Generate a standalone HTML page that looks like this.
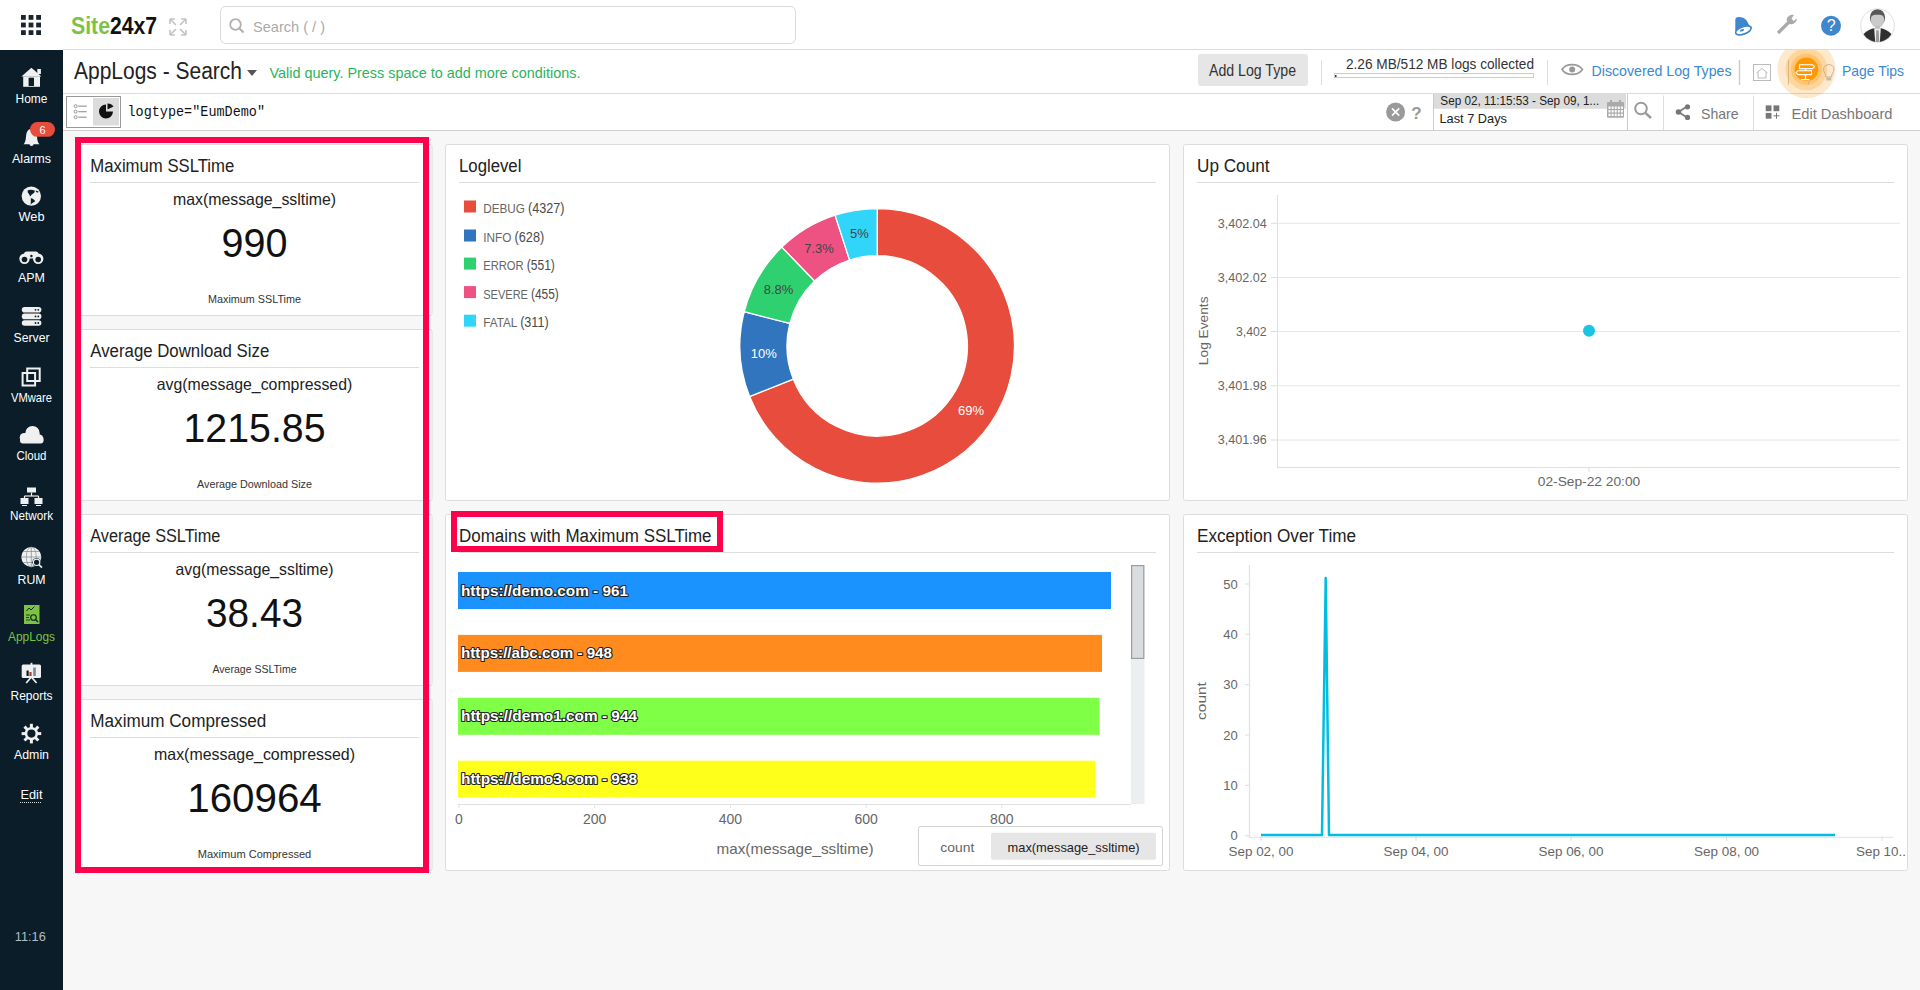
<!DOCTYPE html>
<html><head><meta charset="utf-8"><title>AppLogs - Search</title>
<style>
html,body{margin:0;padding:0;width:1920px;height:990px;overflow:hidden;background:#f7f7f7;}
svg{display:block;font-family:"Liberation Sans",sans-serif;}
</style></head><body>
<svg width="1920" height="990" viewBox="0 0 1920 990">
<rect x="0" y="0" width="1920" height="990" fill="#f7f7f7"/>
<rect x="0" y="0" width="1920" height="50" fill="#fff"/>
<line x1="63" y1="49.5" x2="1920" y2="49.5" stroke="#dcdcdc" stroke-width="1"/>
<rect x="21.0" y="15.0" width="4.8" height="4.8" fill="#1a2530"/>
<rect x="21.0" y="22.6" width="4.8" height="4.8" fill="#1a2530"/>
<rect x="21.0" y="30.2" width="4.8" height="4.8" fill="#1a2530"/>
<rect x="28.6" y="15.0" width="4.8" height="4.8" fill="#1a2530"/>
<rect x="28.6" y="22.6" width="4.8" height="4.8" fill="#1a2530"/>
<rect x="28.6" y="30.2" width="4.8" height="4.8" fill="#1a2530"/>
<rect x="36.2" y="15.0" width="4.8" height="4.8" fill="#1a2530"/>
<rect x="36.2" y="22.6" width="4.8" height="4.8" fill="#1a2530"/>
<rect x="36.2" y="30.2" width="4.8" height="4.8" fill="#1a2530"/>
<text x="71" y="34.4" font-size="23" fill="#7dc242" font-weight="bold" textLength="39" lengthAdjust="spacingAndGlyphs">Site</text>
<text x="110" y="34.4" font-size="23" fill="#111" font-weight="bold" textLength="47" lengthAdjust="spacingAndGlyphs">24x7</text>
<path d="M170 19 L175 19 M170 19 L170 24 M170 19 L176 25" fill="none" stroke="#c4c4c4" stroke-width="1.6"/>
<path d="M186 19 L181 19 M186 19 L186 24 M186 19 L180 25" fill="none" stroke="#c4c4c4" stroke-width="1.6"/>
<path d="M170 35 L175 35 M170 35 L170 30 M170 35 L176 29" fill="none" stroke="#c4c4c4" stroke-width="1.6"/>
<path d="M186 35 L181 35 M186 35 L186 30 M186 35 L180 29" fill="none" stroke="#c4c4c4" stroke-width="1.6"/>
<rect x="220.5" y="6.5" width="575" height="37" fill="#fff" stroke="#dadada" stroke-width="1" rx="5"/>
<circle cx="235.5" cy="24.5" r="5.3" fill="none" stroke="#b0b0b0" stroke-width="1.8"/>
<line x1="239.5" y1="28.5" x2="243.5" y2="32.5" stroke="#b0b0b0" stroke-width="2"/>
<text x="253" y="32" font-size="15" fill="#aaa" textLength="72" lengthAdjust="spacingAndGlyphs">Search ( / )</text>
<path d="M1735.3 31.5 L1735.3 20 C1735.3 17.6 1736.8 16.9 1739 17 C1743.5 17.2 1746 18.8 1747.8 22.5 C1749 25.2 1749.8 26.4 1751.8 26.8 L1748 33 Z" fill="#3f87cc"/>
<ellipse cx="1743.4" cy="30.4" rx="8.2" ry="3.7" transform="rotate(-20 1743.4 30.4)" fill="#fff" stroke="#3f87cc" stroke-width="1.7"/>
<ellipse cx="1742" cy="30.3" rx="2.3" ry="1" transform="rotate(-20 1742 30.3)" fill="#3f87cc"/>
<path d="M1778 33 L1790 21" fill="none" stroke="#aaa" stroke-width="3.2"/>
<path d="M1786.5 20 A6 6 0 0 1 1794 15 L1791.5 18.5 L1793.5 21 L1797 18.5 A6 6 0 0 1 1789.5 24 Z" fill="#aaa"/>
<circle cx="1831" cy="25.8" r="10" fill="#3f87cc"/>
<text x="1831.2" y="31.3" font-size="16" fill="#fff" text-anchor="middle">?</text>
<circle cx="1877.5" cy="25.6" r="16.8" fill="#fff" stroke="#e0e0e0" stroke-width="1"/>
<clipPath id="av"><circle cx="1877.5" cy="25.6" r="16.3"/></clipPath>
<g clip-path="url(#av)">
<ellipse cx="1877.5" cy="17.6" rx="7.6" ry="8.6" fill="#585858"/>
<path d="M1870.9 19 C1870.9 15.5 1873.5 14.5 1877.5 14.8 C1881.5 14.5 1884.1 15.5 1884.1 19 C1884.1 24.5 1881.5 27.8 1877.5 27.8 C1873.5 27.8 1870.9 24.5 1870.9 19 Z" fill="#cacaca"/>
<rect x="1875.3" y="26" width="4.4" height="3" fill="#bdbdbd"/>
<path d="M1861 43 L1863 34.5 C1867 30.5 1871.5 28.6 1874.3 28.3 L1880.7 28.3 C1883.5 28.6 1888 30.5 1892 34.5 L1894 43 Z" fill="#303030"/>
<path d="M1874.2 28.3 L1880.8 28.3 L1879.8 43 L1875.2 43 Z" fill="#f0f0f0"/>
<path d="M1876.3 30.2 L1878.7 30.2 L1879.3 43 L1875.7 43 Z" fill="#9a9a9a"/>
</g>
<rect x="0" y="50" width="63" height="940" fill="#0a1d28"/>
<rect x="63" y="50" width="1857" height="43" fill="#fff"/>
<line x1="63" y1="93.5" x2="1920" y2="93.5" stroke="#dcdcdc" stroke-width="1"/>
<text x="74" y="79" font-size="23" fill="#222" textLength="168" lengthAdjust="spacingAndGlyphs">AppLogs - Search</text>
<path d="M247 70 L257 70 L252 76 Z" fill="#555"/>
<text x="269.5" y="77.7" font-size="15" fill="#2db35d" textLength="311" lengthAdjust="spacingAndGlyphs">Valid query. Press space to add more conditions.</text>
<rect x="1198" y="54" width="110" height="32" fill="#e6e6e6" rx="3"/>
<text x="1209" y="76.3" font-size="16" fill="#333" textLength="87" lengthAdjust="spacingAndGlyphs">Add Log Type</text>
<line x1="1321.5" y1="60" x2="1321.5" y2="85" stroke="#ddd" stroke-width="1"/>
<text x="1346" y="68.8" font-size="14" fill="#333" textLength="188" lengthAdjust="spacingAndGlyphs">2.26 MB/512 MB logs collected</text>
<rect x="1334.5" y="73.5" width="199" height="4" fill="#fff" stroke="#ccc" stroke-width="1"/>
<rect x="1335" y="75" width="1.5" height="2" fill="#333"/>
<line x1="1547.5" y1="60" x2="1547.5" y2="85" stroke="#ddd" stroke-width="1"/>
<path d="M1562 69.5 C1566 63 1578 63 1582.5 69.5 C1578 76 1566 76 1562 69.5 Z" fill="none" stroke="#999" stroke-width="1.6"/>
<circle cx="1572.2" cy="69.5" r="3" fill="#999"/>
<text x="1591.5" y="75.7" font-size="15" fill="#3b88d1" textLength="140" lengthAdjust="spacingAndGlyphs">Discovered Log Types</text>
<line x1="1739.5" y1="60" x2="1739.5" y2="85" stroke="#ccc" stroke-width="1.5"/>
<rect x="1753.5" y="64.5" width="17" height="16" fill="#fff" stroke="#bbb" stroke-width="1"/>
<path d="M1756.5 73 L1762 68.5 L1767.5 73 M1758 72 L1758 78 L1766 78 L1766 72" fill="none" stroke="#bbb" stroke-width="1"/>
<text x="1842" y="75.7" font-size="15" fill="#3b88d1" textLength="62" lengthAdjust="spacingAndGlyphs">Page Tips</text>
<rect x="63" y="94" width="1857" height="36" fill="#fff"/>
<line x1="63" y1="130.5" x2="1920" y2="130.5" stroke="#cfcfcf" stroke-width="1"/>
<rect x="66.5" y="96.5" width="54" height="31" fill="#fff" stroke="#999" stroke-width="1"/>
<rect x="93" y="98" width="26" height="27.5" fill="#dcdcdc"/>
<circle cx="75.6" cy="106.2" r="1.5" fill="none" stroke="#8a8a8a" stroke-width="0.9"/>
<line x1="78.3" y1="106.2" x2="86.7" y2="106.2" stroke="#9a9a9a" stroke-width="1.2"/>
<circle cx="75.6" cy="111.7" r="1.5" fill="none" stroke="#8a8a8a" stroke-width="0.9"/>
<line x1="78.3" y1="111.7" x2="86.7" y2="111.7" stroke="#9a9a9a" stroke-width="1.2"/>
<circle cx="75.6" cy="117.2" r="1.5" fill="none" stroke="#8a8a8a" stroke-width="0.9"/>
<line x1="78.3" y1="117.2" x2="86.7" y2="117.2" stroke="#9a9a9a" stroke-width="1.2"/>
<path d="M106 104.5 A7 7 0 1 0 113 111.5 L106 111.5 Z" fill="#111"/>
<path d="M107.5 103.5 L107.5 109.5 L113.5 106.5 A7 7 0 0 0 107.5 103.5 Z" fill="#111"/>
<text x="127.5" y="116.2" font-size="14.5" fill="#111" textLength="137.5" lengthAdjust="spacingAndGlyphs" font-family="Liberation Mono">logtype=&quot;EumDemo&quot;</text>
<clipPath id="hc"><rect x="1700" y="50" width="220" height="80"/></clipPath><g clip-path="url(#hc)">
<circle cx="1806.4" cy="69.3" r="29" fill="#ffe9cc"/>
<circle cx="1806.4" cy="69.3" r="21" fill="#fed59c"/>
<circle cx="1806.4" cy="69.3" r="15.6" fill="#ffc470"/>
<circle cx="1806.4" cy="69.3" r="11.8" fill="#ff9800"/>
</g>
<line x1="1790.5" y1="93.5" x2="1822.3" y2="93.5" stroke="#dccbb3" stroke-width="1"/>
<line x1="1788.5" y1="60" x2="1788.5" y2="84.5" stroke="#d6b27c" stroke-width="0.9"/>
<line x1="1808.5" y1="80" x2="1808.5" y2="84.5" stroke="#d6b27c" stroke-width="0.9"/>
<path d="M1799.5 64.7 L1812.5 64.7 L1814.5 66.6 L1812.5 68.6 L1799.5 68.6 Z" fill="none" stroke="#fff" stroke-width="1.1"/>
<path d="M1811.5 70.7 L1798 70.7 L1796 72.6 L1798 74.6 L1811.5 74.6 Z" fill="none" stroke="#fff" stroke-width="1.1"/>
<path d="M1805.5 68.6 L1805.5 70.7 M1805.5 74.6 L1805.5 79.5 M1801 79.6 L1809.5 79.6" fill="none" stroke="#fff" stroke-width="1.3"/>
<path d="M1826 77 C1826 73.5 1823.5 72.5 1823.5 69.2 A5.3 5.3 0 0 1 1834 69.2 C1834 72.5 1831.5 73.5 1831.5 77 Z" fill="none" stroke="#bfae98" stroke-width="0.9"/>
<rect x="1826.2" y="77.5" width="5" height="3" fill="#c9bba8"/>
<circle cx="1395.6" cy="112" r="9.5" fill="#9a9a9a"/>
<path d="M1392 108.4 L1399.2 115.6 M1399.2 108.4 L1392 115.6" fill="none" stroke="#fff" stroke-width="1.6"/>
<text x="1416.4" y="119.4" font-size="17" fill="#999" text-anchor="middle" font-weight="bold">?</text>
<line x1="1433.5" y1="94" x2="1433.5" y2="130" stroke="#ccc" stroke-width="1"/>
<line x1="1627.5" y1="94" x2="1627.5" y2="130" stroke="#ccc" stroke-width="1"/>
<rect x="1434" y="94" width="192" height="14.75" fill="#dcdcdc"/>
<text x="1440.3" y="104.8" font-size="13" fill="#222" textLength="159" lengthAdjust="spacingAndGlyphs">Sep 02, 11:15:53 - Sep 09, 1...</text>
<text x="1439.5" y="122.5" font-size="13" fill="#222" textLength="67.5" lengthAdjust="spacingAndGlyphs">Last 7 Days</text>
<rect x="1607" y="102" width="17" height="15.8" fill="#aaa" rx="1"/>
<rect x="1610" y="100" width="2" height="4" fill="#aaa"/>
<rect x="1619" y="100" width="2" height="4" fill="#aaa"/>
<rect x="1608.5" y="106.5" width="2" height="2.4" fill="#fff"/>
<rect x="1608.5" y="110.1" width="2" height="2.4" fill="#fff"/>
<rect x="1608.5" y="113.7" width="2" height="2.4" fill="#fff"/>
<rect x="1611.6" y="106.5" width="2" height="2.4" fill="#fff"/>
<rect x="1611.6" y="110.1" width="2" height="2.4" fill="#fff"/>
<rect x="1611.6" y="113.7" width="2" height="2.4" fill="#fff"/>
<rect x="1614.7" y="106.5" width="2" height="2.4" fill="#fff"/>
<rect x="1614.7" y="110.1" width="2" height="2.4" fill="#fff"/>
<rect x="1614.7" y="113.7" width="2" height="2.4" fill="#fff"/>
<rect x="1617.8" y="106.5" width="2" height="2.4" fill="#fff"/>
<rect x="1617.8" y="110.1" width="2" height="2.4" fill="#fff"/>
<rect x="1617.8" y="113.7" width="2" height="2.4" fill="#fff"/>
<rect x="1620.9" y="106.5" width="2" height="2.4" fill="#fff"/>
<rect x="1620.9" y="110.1" width="2" height="2.4" fill="#fff"/>
<rect x="1620.9" y="113.7" width="2" height="2.4" fill="#fff"/>
<circle cx="1641" cy="108.5" r="5.8" fill="none" stroke="#9a9a9a" stroke-width="2"/>
<line x1="1645.5" y1="113" x2="1651" y2="118" stroke="#9a9a9a" stroke-width="2.4"/>
<line x1="1663.5" y1="95.5" x2="1663.5" y2="130" stroke="#ddd" stroke-width="1"/>
<path d="M1678.5 112 L1687 106.5 M1678.5 112 L1687 117.5" fill="none" stroke="#777" stroke-width="1.5"/>
<circle cx="1678.5" cy="112" r="2.8" fill="#777"/>
<circle cx="1687.5" cy="106.8" r="2.6" fill="#777"/>
<circle cx="1687.5" cy="117.4" r="2.6" fill="#777"/>
<text x="1701" y="119" font-size="15" fill="#777" textLength="37.6" lengthAdjust="spacingAndGlyphs">Share</text>
<line x1="1753.5" y1="95.5" x2="1753.5" y2="130" stroke="#ddd" stroke-width="1"/>
<rect x="1765.7" y="105.4" width="5.8" height="5.8" fill="#777"/>
<rect x="1773.5" y="105.4" width="5.8" height="5.8" fill="#777"/>
<rect x="1765.7" y="112.9" width="5.8" height="5.8" fill="#777"/>
<path d="M1776.5 112.8 L1776.5 118.8 M1773.5 115.8 L1779.5 115.8" fill="none" stroke="#777" stroke-width="1"/>
<text x="1791.5" y="119" font-size="15" fill="#777" textLength="101" lengthAdjust="spacingAndGlyphs">Edit Dashboard</text>
<text x="31.5" y="102.7" font-size="13" fill="#fff" text-anchor="middle" textLength="31.8" lengthAdjust="spacingAndGlyphs">Home</text>
<text x="31.5" y="162.9" font-size="13" fill="#fff" text-anchor="middle" textLength="39" lengthAdjust="spacingAndGlyphs">Alarms</text>
<text x="31.5" y="221.4" font-size="13" fill="#fff" text-anchor="middle" textLength="26" lengthAdjust="spacingAndGlyphs">Web</text>
<text x="31.5" y="281.5" font-size="13" fill="#fff" text-anchor="middle" textLength="27" lengthAdjust="spacingAndGlyphs">APM</text>
<text x="31.5" y="341.5" font-size="13" fill="#fff" text-anchor="middle" textLength="36" lengthAdjust="spacingAndGlyphs">Server</text>
<text x="31.5" y="401.5" font-size="13" fill="#fff" text-anchor="middle" textLength="41" lengthAdjust="spacingAndGlyphs">VMware</text>
<text x="31.5" y="460.3" font-size="13" fill="#fff" text-anchor="middle" textLength="30" lengthAdjust="spacingAndGlyphs">Cloud</text>
<text x="31.5" y="520.3" font-size="13" fill="#fff" text-anchor="middle" textLength="43" lengthAdjust="spacingAndGlyphs">Network</text>
<text x="31.5" y="584" font-size="13" fill="#fff" text-anchor="middle" textLength="28" lengthAdjust="spacingAndGlyphs">RUM</text>
<text x="31.5" y="641" font-size="13" fill="#7dc242" text-anchor="middle" textLength="47" lengthAdjust="spacingAndGlyphs">AppLogs</text>
<text x="31.5" y="699.5" font-size="13" fill="#fff" text-anchor="middle" textLength="42" lengthAdjust="spacingAndGlyphs">Reports</text>
<text x="31.5" y="758.8" font-size="13" fill="#fff" text-anchor="middle" textLength="35" lengthAdjust="spacingAndGlyphs">Admin</text>
<text x="31.5" y="799" font-size="13" fill="#fff" text-anchor="middle" textLength="22" lengthAdjust="spacingAndGlyphs">Edit</text>
<line x1="20" y1="802.5" x2="42" y2="802.5" stroke="#ddd" stroke-width="1" stroke-dasharray="1 1"/>
<text x="30.3" y="940.7" font-size="13" fill="#b4bcc1" text-anchor="middle" textLength="31" lengthAdjust="spacingAndGlyphs">11:16</text>
<path d="M21.4 76.4 L31.4 67.7 L41.4 76.4 Z" fill="#f0f0f0"/>
<rect x="37.3" y="69" width="3.6" height="5" fill="#f0f0f0"/>
<rect x="23.2" y="76.4" width="16.8" height="10.4" fill="#f0f0f0"/>
<rect x="28.6" y="77.7" width="5.4" height="8.3" fill="#0a1d28"/>
<path d="M23.5 144.2 C26.5 142 25.5 135 27 132 C28 129.8 30 128.8 31.5 128.8 C33 128.8 35 129.8 36 132 C37.5 135 36.5 142 39.6 144.2 Z" fill="#f0f0f0"/>
<path d="M29.5 144 A2 2 0 0 0 33.5 144 Z" fill="#f0f0f0"/>
<rect x="30" y="122" width="25" height="14.8" fill="#e74c3c" rx="7.4"/>
<text x="42.5" y="133.8" font-size="11" fill="#fff" text-anchor="middle">6</text>
<circle cx="31.3" cy="196.1" r="9.7" fill="#f0f0f0"/>
<path d="M27.6 190.6 C29 189.4 32 189.4 34.6 190.4 C35.2 191.6 34 193.2 32.5 194 C31.5 194.6 30.8 195.4 30.4 196.6 C29.6 195.2 28.6 193.6 27.8 192.6 Z" fill="#0a1d28"/>
<path d="M35.6 190.4 L38.6 191.4 L38.1 192.8 L36.1 192.1 Z" fill="#0a1d28"/>
<path d="M30.8 198.4 C32.2 198.2 33.6 199.2 35.3 201.3 C33.6 202.1 32.1 203.1 30.6 204.8 C31 202.6 30.8 200.6 30.8 198.4 Z" fill="#0a1d28"/>
<circle cx="24.5" cy="258.8" r="5.2" fill="#f0f0f0"/>
<circle cx="38.2" cy="258.8" r="5.2" fill="#f0f0f0"/>
<rect x="24" y="251.5" width="14.5" height="7" fill="#f0f0f0" rx="3"/>
<circle cx="24.5" cy="259.5" r="2.8" fill="#0a1d28"/>
<circle cx="38.2" cy="259.5" r="2.8" fill="#0a1d28"/>
<circle cx="31.4" cy="256" r="1.2" fill="#0a1d28"/>
<rect x="21.8" y="307.0" width="19.6" height="5.6" fill="#f0f0f0" rx="2.8"/>
<circle cx="35.5" cy="309.8" r="0.9" fill="#0a1d28"/>
<circle cx="38.3" cy="309.8" r="0.9" fill="#0a1d28"/>
<rect x="21.8" y="313.6" width="19.6" height="5.6" fill="#f0f0f0" rx="2.8"/>
<circle cx="35.5" cy="316.40000000000003" r="0.9" fill="#0a1d28"/>
<circle cx="38.3" cy="316.40000000000003" r="0.9" fill="#0a1d28"/>
<rect x="21.8" y="320.2" width="19.6" height="5.6" fill="#f0f0f0" rx="2.8"/>
<circle cx="35.5" cy="323.0" r="0.9" fill="#0a1d28"/>
<circle cx="38.3" cy="323.0" r="0.9" fill="#0a1d28"/>
<rect x="27.2" y="368.5" width="12.5" height="12.5" fill="none" stroke="#f0f0f0" stroke-width="2"/>
<rect x="22.6" y="373" width="12.5" height="12.5" fill="none" stroke="#f0f0f0" stroke-width="2"/>
<circle cx="32.5" cy="433.2" r="7.2" fill="#f0f0f0"/>
<circle cx="24.3" cy="437.6" r="4.6" fill="#f0f0f0"/>
<circle cx="39.2" cy="438.8" r="4.3" fill="#f0f0f0"/>
<rect x="20" y="437.6" width="23.5" height="5.8" fill="#f0f0f0" rx="2.9"/>
<rect x="27" y="487.5" width="9" height="5" fill="#f0f0f0"/>
<line x1="31.5" y1="492.5" x2="31.5" y2="496" stroke="#f0f0f0" stroke-width="1.2"/>
<line x1="24.5" y1="496" x2="38.5" y2="496" stroke="#f0f0f0" stroke-width="1.2"/>
<line x1="24.5" y1="496" x2="24.5" y2="498" stroke="#f0f0f0" stroke-width="1.2"/>
<line x1="38.5" y1="496" x2="38.5" y2="498" stroke="#f0f0f0" stroke-width="1.2"/>
<rect x="20.5" y="498" width="8" height="6" fill="#f0f0f0"/>
<rect x="34.5" y="498" width="8" height="6" fill="#f0f0f0"/>
<line x1="22" y1="505.5" x2="27" y2="505.5" stroke="#f0f0f0" stroke-width="1"/>
<line x1="36" y1="505.5" x2="41" y2="505.5" stroke="#f0f0f0" stroke-width="1"/>
<circle cx="31.3" cy="557" r="10" fill="#f0f0f0"/>
<path d="M21.3 557 L41.3 557 M31.3 547 L31.3 567 M23.5 551.5 L39 551.5 M23.5 562.5 L39 562.5" fill="none" stroke="#7d878c" stroke-width="0.7"/>
<ellipse cx="31.3" cy="557" rx="5" ry="10" fill="none" stroke="#8a9398" stroke-width="0.7"/>
<circle cx="36.6" cy="562.3" r="4.3" fill="#0a1d28"/>
<circle cx="36.6" cy="562.3" r="3.2" fill="none" stroke="#f0f0f0" stroke-width="1.2"/>
<line x1="38.9" y1="564.6" x2="42" y2="567.6" stroke="#f0f0f0" stroke-width="1.6"/>
<rect x="24" y="605" width="15.5" height="19" fill="#7dc242"/>
<path d="M26.5 611 L29 608 L31 610 L34.5 606.5" fill="none" stroke="#0a1d28" stroke-width="0.9"/>
<path d="M26 615 L30 615 M26 617.5 L29 617.5 M26 620 L30 620" fill="none" stroke="#0a1d28" stroke-width="0.8"/>
<circle cx="33.5" cy="617.5" r="2.8" fill="none" stroke="#0a1d28" stroke-width="1.1"/>
<line x1="35.5" y1="619.5" x2="38" y2="622" stroke="#0a1d28" stroke-width="1.3"/>
<rect x="21.7" y="664.5" width="19.3" height="13.4" fill="#f0f0f0" rx="1.5"/>
<rect x="30.6" y="662.8" width="1.8" height="2.2" fill="#f0f0f0"/>
<path d="M31.4 677 L26.2 683 M31.4 677 L36.6 683" fill="none" stroke="#f0f0f0" stroke-width="1.7"/>
<rect x="26.5" y="670.5" width="2.2" height="5.5" fill="#0a1d28"/>
<rect x="29.4" y="672" width="2.2" height="4" fill="#c0392b"/>
<rect x="33.2" y="667.5" width="2.6" height="8.5" fill="#7a8a99"/>
<rect x="29.90" y="723.80" width="3" height="5" fill="#f0f0f0" transform="rotate(0 31.4 733.6)"/>
<rect x="29.90" y="723.80" width="3" height="5" fill="#f0f0f0" transform="rotate(45 31.4 733.6)"/>
<rect x="29.90" y="723.80" width="3" height="5" fill="#f0f0f0" transform="rotate(90 31.4 733.6)"/>
<rect x="29.90" y="723.80" width="3" height="5" fill="#f0f0f0" transform="rotate(135 31.4 733.6)"/>
<rect x="29.90" y="723.80" width="3" height="5" fill="#f0f0f0" transform="rotate(180 31.4 733.6)"/>
<rect x="29.90" y="723.80" width="3" height="5" fill="#f0f0f0" transform="rotate(225 31.4 733.6)"/>
<rect x="29.90" y="723.80" width="3" height="5" fill="#f0f0f0" transform="rotate(270 31.4 733.6)"/>
<rect x="29.90" y="723.80" width="3" height="5" fill="#f0f0f0" transform="rotate(315 31.4 733.6)"/>
<circle cx="31.4" cy="733.6" r="5.4" fill="none" stroke="#f0f0f0" stroke-width="2.6"/>
<rect x="77.5" y="144.5" width="354.5" height="171" fill="#fff" stroke="#dcdcdc" stroke-width="1" rx="2"/>
<text x="90.3" y="172.2" font-size="18" fill="#222" textLength="144" lengthAdjust="spacingAndGlyphs">Maximum SSLTime</text>
<line x1="90" y1="182.5" x2="419" y2="182.5" stroke="#ddd" stroke-width="1"/>
<text x="254.5" y="205.3" font-size="16.5" fill="#222" text-anchor="middle" textLength="163" lengthAdjust="spacingAndGlyphs">max(message_ssltime)</text>
<text x="254.5" y="256.6" font-size="41" fill="#111" text-anchor="middle" textLength="66" lengthAdjust="spacingAndGlyphs">990</text>
<text x="254.5" y="303" font-size="11" fill="#333" text-anchor="middle" textLength="93" lengthAdjust="spacingAndGlyphs">Maximum SSLTime</text>
<rect x="77.5" y="329.5" width="354.5" height="171" fill="#fff" stroke="#dcdcdc" stroke-width="1" rx="2"/>
<text x="90.3" y="357.2" font-size="18" fill="#222" textLength="179" lengthAdjust="spacingAndGlyphs">Average Download Size</text>
<line x1="90" y1="367.5" x2="419" y2="367.5" stroke="#ddd" stroke-width="1"/>
<text x="254.5" y="390.3" font-size="16.5" fill="#222" text-anchor="middle" textLength="195.5" lengthAdjust="spacingAndGlyphs">avg(message_compressed)</text>
<text x="254.5" y="441.6" font-size="41" fill="#111" text-anchor="middle" textLength="142" lengthAdjust="spacingAndGlyphs">1215.85</text>
<text x="254.5" y="488" font-size="11" fill="#333" text-anchor="middle" textLength="115" lengthAdjust="spacingAndGlyphs">Average Download Size</text>
<rect x="77.5" y="514.5" width="354.5" height="171" fill="#fff" stroke="#dcdcdc" stroke-width="1" rx="2"/>
<text x="90.3" y="542.2" font-size="18" fill="#222" textLength="130" lengthAdjust="spacingAndGlyphs">Average SSLTime</text>
<line x1="90" y1="552.5" x2="419" y2="552.5" stroke="#ddd" stroke-width="1"/>
<text x="254.5" y="575.3" font-size="16.5" fill="#222" text-anchor="middle" textLength="158" lengthAdjust="spacingAndGlyphs">avg(message_ssltime)</text>
<text x="254.5" y="626.6" font-size="41" fill="#111" text-anchor="middle" textLength="97" lengthAdjust="spacingAndGlyphs">38.43</text>
<text x="254.5" y="673" font-size="11" fill="#333" text-anchor="middle" textLength="84" lengthAdjust="spacingAndGlyphs">Average SSLTime</text>
<rect x="77.5" y="699.5" width="354.5" height="171" fill="#fff" stroke="#dcdcdc" stroke-width="1" rx="2"/>
<text x="90.3" y="727.2" font-size="18" fill="#222" textLength="176" lengthAdjust="spacingAndGlyphs">Maximum Compressed</text>
<line x1="90" y1="737.5" x2="419" y2="737.5" stroke="#ddd" stroke-width="1"/>
<text x="254.5" y="760.3" font-size="16.5" fill="#222" text-anchor="middle" textLength="201" lengthAdjust="spacingAndGlyphs">max(message_compressed)</text>
<text x="254.5" y="811.6" font-size="41" fill="#111" text-anchor="middle" textLength="134.5" lengthAdjust="spacingAndGlyphs">160964</text>
<text x="254.5" y="858" font-size="11" fill="#333" text-anchor="middle" textLength="113.5" lengthAdjust="spacingAndGlyphs">Maximum Compressed</text>
<rect x="78" y="140" width="348" height="730" fill="none" stroke="#ff004c" stroke-width="6"/>
<rect x="445.5" y="144.5" width="724" height="356" fill="#fff" stroke="#dcdcdc" stroke-width="1" rx="2"/>
<text x="459" y="172.4" font-size="18" fill="#222" textLength="62.4" lengthAdjust="spacingAndGlyphs">Loglevel</text>
<line x1="459" y1="182.5" x2="1156" y2="182.5" stroke="#ddd" stroke-width="1"/>
<rect x="464" y="200.5" width="12" height="12" fill="#e74c3c"/>
<text x="483.2" y="213.2" font-size="13" fill="#666" textLength="81.3" lengthAdjust="spacingAndGlyphs">DEBUG <tspan fill="#4a4a4a" font-size="14">(4327)</tspan></text>
<rect x="464" y="229.5" width="12" height="12" fill="#3275bf"/>
<text x="483.2" y="242.2" font-size="13" fill="#666" textLength="61" lengthAdjust="spacingAndGlyphs">INFO <tspan fill="#4a4a4a" font-size="14">(628)</tspan></text>
<rect x="464" y="257.6" width="12" height="12" fill="#2fd06f"/>
<text x="483.2" y="270.3" font-size="13" fill="#666" textLength="71.7" lengthAdjust="spacingAndGlyphs">ERROR <tspan fill="#4a4a4a" font-size="14">(551)</tspan></text>
<rect x="464" y="286.1" width="12" height="12" fill="#ee5283"/>
<text x="483.2" y="298.8" font-size="13" fill="#666" textLength="75.6" lengthAdjust="spacingAndGlyphs">SEVERE <tspan fill="#4a4a4a" font-size="14">(455)</tspan></text>
<rect x="464" y="314.7" width="12" height="12" fill="#31d5f9"/>
<text x="483.2" y="327.4" font-size="13" fill="#666" textLength="65.5" lengthAdjust="spacingAndGlyphs">FATAL <tspan fill="#4a4a4a" font-size="14">(311)</tspan></text>
<path d="M877.20 208.60 A137.3 137.3 0 1 1 749.58 396.53 L793.36 379.16 A90.2 90.2 0 1 0 877.20 255.70 Z" fill="#e74c3c" stroke="#fff" stroke-width="1.3"/>
<path d="M749.58 396.53 A137.3 137.3 0 0 1 744.22 311.74 L789.84 323.46 A90.2 90.2 0 0 0 793.36 379.16 Z" fill="#3275bf" stroke="#fff" stroke-width="1.3"/>
<path d="M744.22 311.74 A137.3 137.3 0 0 1 781.88 247.08 L814.58 280.98 A90.2 90.2 0 0 0 789.84 323.46 Z" fill="#2fd06f" stroke="#fff" stroke-width="1.3"/>
<path d="M781.88 247.08 A137.3 137.3 0 0 1 835.11 215.21 L849.55 260.04 A90.2 90.2 0 0 0 814.58 280.98 Z" fill="#ee5283" stroke="#fff" stroke-width="1.3"/>
<path d="M835.11 215.21 A137.3 137.3 0 0 1 877.20 208.60 L877.20 255.70 A90.2 90.2 0 0 0 849.55 260.04 Z" fill="#31d5f9" stroke="#fff" stroke-width="1.3"/>
<text x="971" y="414.5" font-size="13" fill="#fff" text-anchor="middle">69%</text>
<text x="763.8" y="357.5" font-size="13" fill="#fff" text-anchor="middle">10%</text>
<text x="778.5" y="293.5" font-size="13" fill="#444" text-anchor="middle">8.8%</text>
<text x="819" y="252.7" font-size="13" fill="#444" text-anchor="middle">7.3%</text>
<text x="859.4" y="238.4" font-size="13" fill="#444" text-anchor="middle">5%</text>
<rect x="1183.5" y="144.5" width="724" height="356" fill="#fff" stroke="#dcdcdc" stroke-width="1" rx="2"/>
<text x="1197" y="172.4" font-size="18" fill="#222" textLength="72.5" lengthAdjust="spacingAndGlyphs">Up Count</text>
<line x1="1197" y1="182.5" x2="1894" y2="182.5" stroke="#ddd" stroke-width="1"/>
<line x1="1277" y1="223.3" x2="1900" y2="223.3" stroke="#e6e6e6" stroke-width="1"/>
<line x1="1271" y1="223.3" x2="1277" y2="223.3" stroke="#ddd" stroke-width="1"/>
<text x="1266.7" y="227.60000000000002" font-size="12" fill="#666" text-anchor="end" textLength="49" lengthAdjust="spacingAndGlyphs">3,402.04</text>
<line x1="1277" y1="277.5" x2="1900" y2="277.5" stroke="#e6e6e6" stroke-width="1"/>
<line x1="1271" y1="277.5" x2="1277" y2="277.5" stroke="#ddd" stroke-width="1"/>
<text x="1266.7" y="281.8" font-size="12" fill="#666" text-anchor="end" textLength="49" lengthAdjust="spacingAndGlyphs">3,402.02</text>
<line x1="1277" y1="331.5" x2="1900" y2="331.5" stroke="#e6e6e6" stroke-width="1"/>
<line x1="1271" y1="331.5" x2="1277" y2="331.5" stroke="#ddd" stroke-width="1"/>
<text x="1266.7" y="335.8" font-size="12" fill="#666" text-anchor="end" textLength="30.8" lengthAdjust="spacingAndGlyphs">3,402</text>
<line x1="1277" y1="385.8" x2="1900" y2="385.8" stroke="#e6e6e6" stroke-width="1"/>
<line x1="1271" y1="385.8" x2="1277" y2="385.8" stroke="#ddd" stroke-width="1"/>
<text x="1266.7" y="390.1" font-size="12" fill="#666" text-anchor="end" textLength="49" lengthAdjust="spacingAndGlyphs">3,401.98</text>
<line x1="1277" y1="440" x2="1900" y2="440" stroke="#e6e6e6" stroke-width="1"/>
<line x1="1271" y1="440" x2="1277" y2="440" stroke="#ddd" stroke-width="1"/>
<text x="1266.7" y="444.3" font-size="12" fill="#666" text-anchor="end" textLength="49" lengthAdjust="spacingAndGlyphs">3,401.96</text>
<line x1="1277.5" y1="195" x2="1277.5" y2="467.5" stroke="#e0e0e0" stroke-width="1"/>
<line x1="1277" y1="467.5" x2="1900" y2="467.5" stroke="#e0e0e0" stroke-width="1"/>
<line x1="1589" y1="467.5" x2="1589" y2="472" stroke="#ddd" stroke-width="1"/>
<circle cx="1589" cy="330.8" r="6" fill="#1bc4e3"/>
<text x="1589" y="486.2" font-size="13" fill="#666" text-anchor="middle" textLength="102.5" lengthAdjust="spacingAndGlyphs">02-Sep-22 20:00</text>
<text x="0" y="0" font-size="13" fill="#666" text-anchor="middle" textLength="68.7" lengthAdjust="spacingAndGlyphs" transform="translate(1207.5 330.8) rotate(-90)">Log Events</text>
<rect x="445.5" y="514.5" width="724" height="356" fill="#fff" stroke="#dcdcdc" stroke-width="1" rx="2"/>
<text x="459" y="542" font-size="18" fill="#222" textLength="252.5" lengthAdjust="spacingAndGlyphs">Domains with Maximum SSLTime</text>
<line x1="459" y1="552.5" x2="1156" y2="552.5" stroke="#ddd" stroke-width="1"/>
<rect x="458" y="572" width="653" height="37" fill="#1a93fe"/>
<text x="461" y="595.5" font-size="15" fill="#fff" font-weight="bold" textLength="167" lengthAdjust="spacingAndGlyphs" stroke="#222" stroke-width="2.2" paint-order="stroke" stroke-linejoin="round">https://demo.com - 961</text>
<rect x="458" y="634.9" width="644" height="37" fill="#ff8b1f"/>
<text x="461" y="658.4" font-size="15" fill="#fff" font-weight="bold" textLength="151" lengthAdjust="spacingAndGlyphs" stroke="#222" stroke-width="2.2" paint-order="stroke" stroke-linejoin="round">https://abc.com - 948</text>
<rect x="458" y="697.8" width="641.5" height="37" fill="#80ff47"/>
<text x="461" y="721.3" font-size="15" fill="#fff" font-weight="bold" textLength="176" lengthAdjust="spacingAndGlyphs" stroke="#222" stroke-width="2.2" paint-order="stroke" stroke-linejoin="round">https://demo1.com - 944</text>
<rect x="458" y="760.7" width="637.5" height="37" fill="#ffff1c"/>
<text x="461" y="784.2" font-size="15" fill="#fff" font-weight="bold" textLength="176" lengthAdjust="spacingAndGlyphs" stroke="#222" stroke-width="2.2" paint-order="stroke" stroke-linejoin="round">https://demo3.com - 938</text>
<line x1="458" y1="804.5" x2="1131" y2="804.5" stroke="#e0e0e0" stroke-width="1"/>
<line x1="459.0" y1="804" x2="459.0" y2="808" stroke="#e0e0e0" stroke-width="1"/>
<text x="459.0" y="824.4" font-size="14" fill="#666" text-anchor="middle">0</text>
<line x1="594.7" y1="804" x2="594.7" y2="808" stroke="#e0e0e0" stroke-width="1"/>
<text x="594.7" y="824.4" font-size="14" fill="#666" text-anchor="middle">200</text>
<line x1="730.4" y1="804" x2="730.4" y2="808" stroke="#e0e0e0" stroke-width="1"/>
<text x="730.4" y="824.4" font-size="14" fill="#666" text-anchor="middle">400</text>
<line x1="866.0999999999999" y1="804" x2="866.0999999999999" y2="808" stroke="#e0e0e0" stroke-width="1"/>
<text x="866.0999999999999" y="824.4" font-size="14" fill="#666" text-anchor="middle">600</text>
<line x1="1001.8" y1="804" x2="1001.8" y2="808" stroke="#e0e0e0" stroke-width="1"/>
<text x="1001.8" y="824.4" font-size="14" fill="#666" text-anchor="middle">800</text>
<text x="795" y="853.9" font-size="15" fill="#666" text-anchor="middle" textLength="157" lengthAdjust="spacingAndGlyphs">max(message_ssltime)</text>
<rect x="1131" y="565" width="13.5" height="239" fill="#eceff0"/>
<rect x="1131.6" y="565.6" width="12.2" height="92.8" fill="#dadddf" stroke="#9a9c9d" stroke-width="1.2"/>
<rect x="918.5" y="826.5" width="244" height="39" fill="#fff" stroke="#d2d2d2" stroke-width="1" rx="2"/>
<text x="957.3" y="852" font-size="13" fill="#666" text-anchor="middle" textLength="34" lengthAdjust="spacingAndGlyphs">count</text>
<rect x="991" y="832.7" width="165" height="27" fill="#e6e6e6" rx="2"/>
<text x="1073.6" y="852" font-size="13" fill="#222" text-anchor="middle" textLength="132" lengthAdjust="spacingAndGlyphs">max(message_ssltime)</text>
<rect x="454" y="514" width="266" height="35" fill="none" stroke="#ff004c" stroke-width="6"/>
<rect x="1183.5" y="514.5" width="724" height="356" fill="#fff" stroke="#dcdcdc" stroke-width="1" rx="2"/>
<text x="1197" y="542.4" font-size="18" fill="#222" textLength="159" lengthAdjust="spacingAndGlyphs">Exception Over Time</text>
<line x1="1197" y1="552.5" x2="1894" y2="552.5" stroke="#ddd" stroke-width="1"/>
<line x1="1245" y1="584" x2="1249" y2="584" stroke="#ddd" stroke-width="1"/>
<text x="1237.8" y="588.5" font-size="13" fill="#666" text-anchor="end">50</text>
<line x1="1245" y1="634.2" x2="1249" y2="634.2" stroke="#ddd" stroke-width="1"/>
<text x="1237.8" y="638.7" font-size="13" fill="#666" text-anchor="end">40</text>
<line x1="1245" y1="684.6" x2="1249" y2="684.6" stroke="#ddd" stroke-width="1"/>
<text x="1237.8" y="689.1" font-size="13" fill="#666" text-anchor="end">30</text>
<line x1="1245" y1="735" x2="1249" y2="735" stroke="#ddd" stroke-width="1"/>
<text x="1237.8" y="739.5" font-size="13" fill="#666" text-anchor="end">20</text>
<line x1="1245" y1="785.3" x2="1249" y2="785.3" stroke="#ddd" stroke-width="1"/>
<text x="1237.8" y="789.8" font-size="13" fill="#666" text-anchor="end">10</text>
<line x1="1245" y1="835.8" x2="1249" y2="835.8" stroke="#ddd" stroke-width="1"/>
<text x="1237.8" y="840.3" font-size="13" fill="#666" text-anchor="end">0</text>
<line x1="1249.5" y1="565" x2="1249.5" y2="837.5" stroke="#e2e2e2" stroke-width="1.3"/>
<line x1="1249" y1="837.3" x2="1893" y2="837.3" stroke="#e2e2e2" stroke-width="1"/>
<line x1="1261" y1="836.5" x2="1261" y2="841" stroke="#ddd" stroke-width="1"/>
<text x="1261" y="856" font-size="13" fill="#666" text-anchor="middle" textLength="65" lengthAdjust="spacingAndGlyphs">Sep 02, 00</text>
<line x1="1416" y1="836.5" x2="1416" y2="841" stroke="#ddd" stroke-width="1"/>
<text x="1416" y="856" font-size="13" fill="#666" text-anchor="middle" textLength="65" lengthAdjust="spacingAndGlyphs">Sep 04, 00</text>
<line x1="1571" y1="836.5" x2="1571" y2="841" stroke="#ddd" stroke-width="1"/>
<text x="1571" y="856" font-size="13" fill="#666" text-anchor="middle" textLength="65" lengthAdjust="spacingAndGlyphs">Sep 06, 00</text>
<line x1="1726.6" y1="836.5" x2="1726.6" y2="841" stroke="#ddd" stroke-width="1"/>
<text x="1726.6" y="856" font-size="13" fill="#666" text-anchor="middle" textLength="65" lengthAdjust="spacingAndGlyphs">Sep 08, 00</text>
<line x1="1882" y1="836.5" x2="1882" y2="841" stroke="#ddd" stroke-width="1"/>
<text x="1856" y="856" font-size="13" fill="#666" textLength="50" lengthAdjust="spacingAndGlyphs">Sep 10..</text>
<path d="M1261 835 L1322 835 L1325.7 578 L1329 835 L1835 835" fill="none" stroke="#00bedf" stroke-width="2.5" stroke-linejoin="round"/>
<text x="0" y="0" font-size="13" fill="#666" text-anchor="middle" textLength="37.8" lengthAdjust="spacingAndGlyphs" transform="translate(1205.5 701) rotate(-90)">count</text>
</svg>
</body></html>
